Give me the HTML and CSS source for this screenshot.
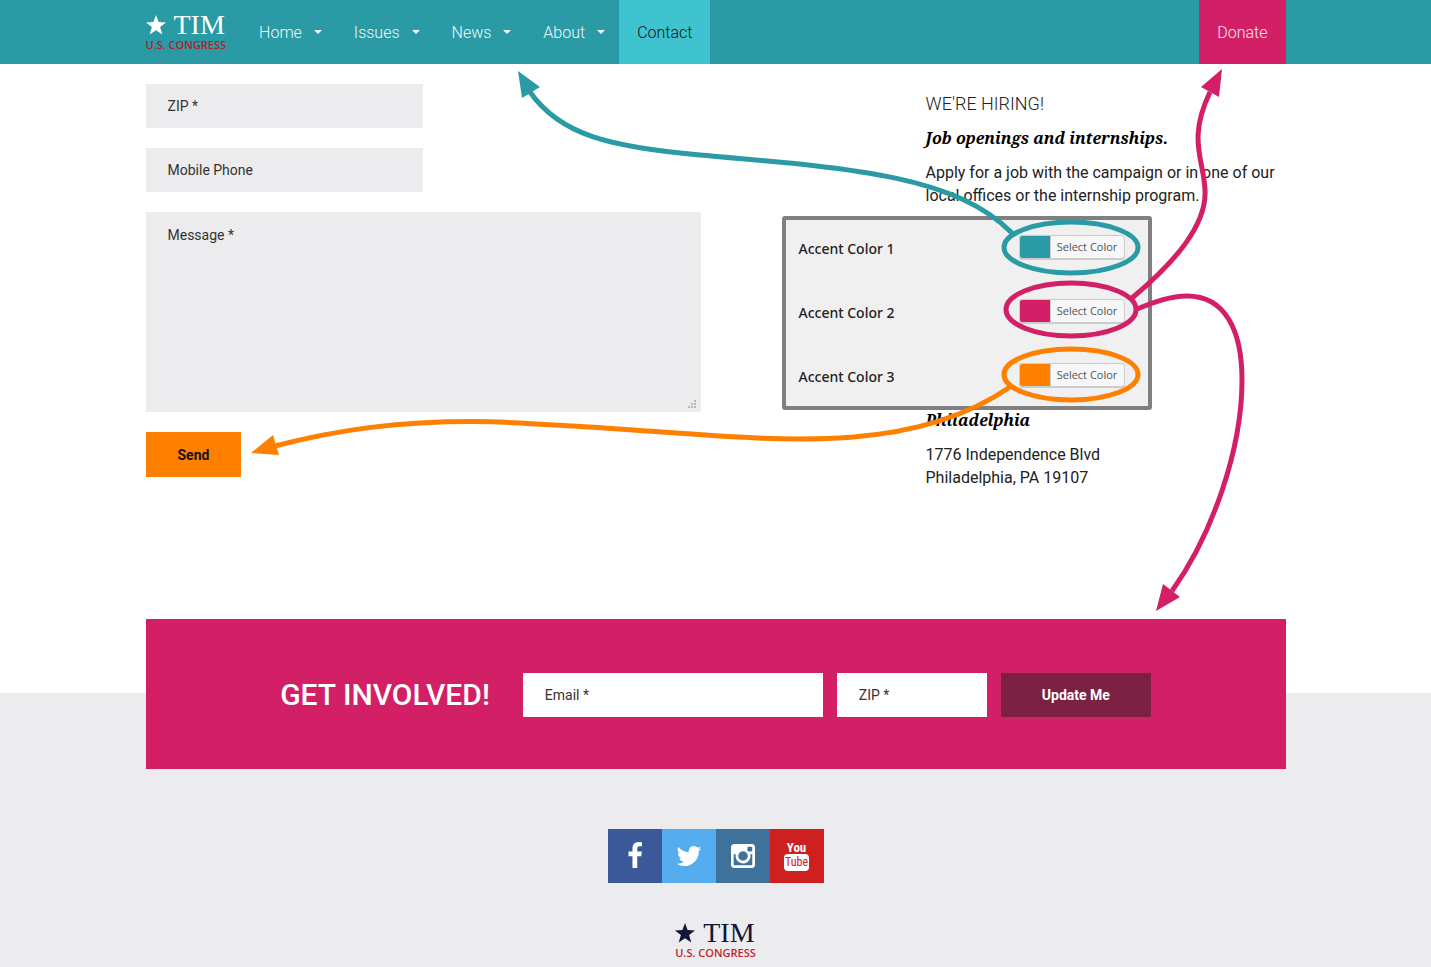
FILE: index.html
```html
<!DOCTYPE html>
<html lang="en">
<head>
<meta charset="utf-8">
<meta name="viewport" content="width=device-width, initial-scale=1">
<title>Contact - Tim for U.S. Congress</title>
<link rel="stylesheet" href="styles.css">
</head>
<body>
<header class="topbar">
  <div class="container topbar-inner">
    <a class="logo" href="#">
      <span class="logo-top">
        <svg class="logo-star" viewBox="0 0 20 20" aria-hidden="true"><polygon points="10,0 12.6,7.1 20,7.4 14.1,12 16.3,19.5 10,15.2 3.7,19.5 5.9,12 0,7.4 7.4,7.1"/></svg>
        <span class="logo-name">TIM</span>
      </span>
      <span class="logo-sub">U.S. CONGRESS</span>
    </a>
    <nav class="nav">
      <a class="nav-link has-menu" href="#">Home</a>
      <a class="nav-link has-menu" href="#">Issues</a>
      <a class="nav-link has-menu" href="#">News</a>
      <a class="nav-link has-menu" href="#">About</a>
      <a class="nav-link active" href="#">Contact</a>
    </nav>
    <a class="nav-link donate" href="#">Donate</a>
  </div>
</header>

<main class="container main">
  <form class="contact-form">
    <input class="field field-half" type="text" placeholder="ZIP *" aria-label="ZIP">
    <input class="field field-half" type="tel" placeholder="Mobile Phone" aria-label="Mobile Phone">
    <div class="message">
      <textarea class="field field-message" placeholder="Message *" aria-label="Message"></textarea>
      <svg class="grip" viewBox="0 0 8 8" aria-hidden="true"><path d="M6 0h2v2H6zM3 3h2v2H3zM6 3h2v2H6zM0 6h2v2H0zM3 6h2v2H3zM6 6h2v2H6z"/></svg>
    </div>
    <button class="send" type="button">Send</button>
  </form>

  <aside class="info">
    <h2 class="info-title">WE'RE HIRING!</h2>
    <h3 class="info-lead">Job openings and internships.</h3>
    <p class="info-text">Apply for a job with the campaign or in one of our local offices or the internship program.</p>
    <section class="office">
      <h3 class="info-lead">Philadelphia</h3>
      <p class="info-text">1776 Independence Blvd<br>Philadelphia, PA 19107</p>
    </section>
  </aside>

  <section class="palette">
    <div class="palette-row">
      <span class="palette-label" id="accent1">Accent Color 1</span>
      <button class="picker" type="button" aria-describedby="accent1"><span class="swatch swatch-teal"></span><span class="picker-text">Select Color</span></button>
    </div>
    <div class="palette-row">
      <span class="palette-label" id="accent2">Accent Color 2</span>
      <button class="picker" type="button" aria-describedby="accent2"><span class="swatch swatch-pink"></span><span class="picker-text">Select Color</span></button>
    </div>
    <div class="palette-row">
      <span class="palette-label" id="accent3">Accent Color 3</span>
      <button class="picker" type="button" aria-describedby="accent3"><span class="swatch swatch-orange"></span><span class="picker-text">Select Color</span></button>
    </div>
  </section>

  <svg class="arrows" viewBox="146 64 1140 555" aria-hidden="true">
    <g class="arrow-teal">
      <ellipse cx="1071" cy="247.500" rx="67" ry="25.500"/>
      <path d="M1012 233C955 175 850 168 700 155C610 147 560 135 530 92"/>
      <polygon points="518,71 540,87 522,98"/>
    </g>
    <g class="arrow-pink">
      <ellipse cx="1071" cy="309.500" rx="65" ry="26.500"/>
      <path d="M1132 298C1175 262 1207 225 1205 190C1204 160 1187 140 1210 92"/>
      <polygon points="1222,69 1201,87 1219,97"/>
      <path d="M1137 309C1155 302 1170 296 1187 296C1225 296 1242 330 1242 380C1242 450 1212 535 1172 591"/>
      <polygon points="1156,611 1163,584 1180,597"/>
    </g>
    <g class="arrow-orange">
      <ellipse cx="1071" cy="374.500" rx="67" ry="25.500"/>
      <path d="M1010 387C900 463 750 436 573 426C540 424 505 421.500 473 421.500C400 421.500 340 429 275 446"/>
      <polygon points="251,453 273,435 279,455"/>
    </g>
  </svg>
</main>

<section class="signup-band">
  <form class="container signup">
    <h2 class="signup-title">GET INVOLVED!</h2>
    <div class="signup-fields">
      <input class="field field-white field-email" type="email" placeholder="Email *" aria-label="Email">
      <input class="field field-white field-zip" type="text" placeholder="ZIP *" aria-label="ZIP code">
      <button class="update" type="button">Update Me</button>
    </div>
  </form>
</section>

<footer class="footer">
  <div class="social">
    <a class="social-link facebook" href="#" aria-label="Facebook"><svg viewBox="0 0 1792 1792"><path d="M1343 12v264h-157q-86 0-116 36t-30 108v189h293l-39 296h-254v759h-306v-759h-255v-296h255v-218q0-186 104-288.500t277-102.500q147 0 228 12z"/></svg></a>
    <a class="social-link twitter" href="#" aria-label="Twitter"><svg viewBox="0 0 1792 1792"><path d="M1684 408q-67 98-162 167 1 14 1 42 0 130-38 259.500t-115.500 248.500-184.500 210.500-258 146-323 54.500q-271 0-496-145 35 4 78 4 225 0 401-138-105-2-188-64.500t-114-159.500q33 5 61 5 43 0 85-11-112-23-185.500-111.500t-73.500-205.500v-4q68 38 146 41-66-44-105-115t-39-154q0-88 44-163 121 149 294.500 238.500t371.500 99.500q-8-38-8-74 0-134 94.500-228.500t228.500-94.500q140 0 236 102 109-21 205-78-37 115-142 178 93-10 186-50z"/></svg></a>
    <a class="social-link instagram" href="#" aria-label="Instagram"><svg viewBox="0 0 1792 1792"><path d="M1490 1426v-648h-135q20 63 20 131 0 126-64 232.500t-174 168.500-240 62q-197 0-337-135.500t-140-327.500q0-68 20-131h-141v648q0 26 17.500 43.500t43.500 17.500h1069q25 0 43-17.500t18-43.500zm-284-533q0-124-90.500-211.500t-218.500-87.500q-127 0-217.500 87.500t-90.500 211.500 90.500 211.500 217.500 87.500q128 0 218.500-87.500t90.500-211.500zm284-360v-165q0-28-20-48.500t-49-20.500h-174q-29 0-49 20.500t-20 48.500v165q0 29 20 49t49 20h174q29 0 49-20t20-49zm174-208v1142q0 81-58 139t-139 58h-1142q-81 0-139-58t-58-139v-1142q0-81 58-139t139-58h1142q81 0 139 58t58 139z"/></svg></a>
    <a class="social-link youtube" href="#"><span class="yt-you">You</span><span class="yt-tube">Tube</span></a>
  </div>
  <a class="logo logo-dark" href="#">
    <span class="logo-top">
      <svg class="logo-star" viewBox="0 0 20 20" aria-hidden="true"><polygon points="10,0 12.6,7.1 20,7.4 14.1,12 16.3,19.5 10,15.2 3.7,19.5 5.9,12 0,7.4 7.4,7.1"/></svg>
      <span class="logo-name">TIM</span>
    </span>
    <span class="logo-sub">U.S. CONGRESS</span>
  </a>
</footer>
</body>
</html>
```

FILE: styles.css
```css
:root {
  --teal: #2a9ba4;
  --pink: #d31f66;
  --orange: #ff8000;
  --gray: #ececee;
}

* { box-sizing: border-box; }

body {
  margin: 0;
  min-height: 100vh;
  display: flex;
  flex-direction: column;
  background: #fff;
  color: #222;
  font-family: Roboto, sans-serif;
  font-size: 16px;
  line-height: 23px;
}

h2, h3, p { margin: 0; }
a { text-decoration: none; }
button, input, textarea { font-family: inherit; border: 0; border-radius: 0; margin: 0; }
button { cursor: pointer; }

.container {
  width: 100%;
  max-width: 1140px;
  margin: 0 auto;
}

/* Header */
.topbar { background: var(--teal); }
.topbar-inner { display: flex; align-items: stretch; height: 64px; }
.nav { display: flex; margin-left: 15px; }
.nav-link {
  display: flex;
  align-items: center;
  padding: 0 18px;
  color: #f0f8f9;
  font-size: 16px;
  font-weight: 300;
}
.has-menu { padding-right: 14px; }
.has-menu::after {
  content: "";
  margin-left: 12px;
  border: 4px solid transparent;
  border-top-color: currentColor;
  border-bottom: 0;
}
.active { background: #3fc4cf; color: #111; }
.donate { margin-left: auto; background: var(--pink); color: #fbe6ee; }

/* Logo */
.logo {
  display: flex;
  flex-direction: column;
  justify-content: center;
  gap: 2px;
  color: #fff;
}
.logo-top { display: flex; align-items: center; gap: 8px; height: 24px; }
.logo-star { width: 20px; height: 20px; fill: currentColor; }
.logo-name { font-family: "Liberation Serif", serif; font-size: 28px; line-height: 24px; }
.logo-sub {
  color: #b2202c;
  font-family: "Open Sans", sans-serif;
  font-size: 11px;
  font-weight: 600;
  line-height: 12px;
}
.logo-dark { color: #14163a; }
.logo-dark .logo-sub { color: #c0272d; }

/* Main */
.main {
  position: relative;
  display: flex;
  justify-content: space-between;
  padding: 20px 0 130px;
}
.contact-form {
  width: 49%;
  max-width: 555px;
  display: flex;
  flex-direction: column;
  align-items: flex-start;
  gap: 20px;
}
.field {
  display: block;
  height: 44px;
  padding: 0 22px;
  background: var(--gray);
  color: #333;
  font-size: 14px;
}
.field::placeholder { color: #333; opacity: 1; }
.field-half { width: 50%; }
.message { position: relative; width: 100%; }
.field-message { width: 100%; height: 200px; padding: 12px 22px; line-height: 22px; resize: none; }
.grip { position: absolute; right: 5px; bottom: 4px; width: 8px; height: 8px; fill: #b9b9bb; }
.send {
  height: 45px;
  padding: 0 32px;
  background: var(--orange);
  color: #111;
  font-size: 14px;
  font-weight: 700;
}

.info { width: 360px; padding-top: 8px; }
.info-title { font-size: 18px; font-weight: 300; line-height: 24px; }
.info-lead {
  padding: 11px 0;
  color: #000;
  font-family: "Noto Serif", "DejaVu Serif Condensed", "DejaVu Serif", serif;
  font-size: 16px;
  font-style: italic;
  font-weight: 700;
  line-height: 23px;
}
.office { margin-top: 191px; }

/* Accent colour panel */
.palette {
  position: absolute;
  top: 152px;
  right: 134px;
  width: 370px;
  display: flex;
  flex-direction: column;
  gap: 40px;
  padding: 15px 23px 19px 13px;
  border: 4px solid #808080;
  border-radius: 3px;
  background: #f0f0f0;
}
.palette-row { display: flex; align-items: center; justify-content: space-between; height: 24px; }
.palette-label { padding-top: 2px; font-family: "Noto Sans", sans-serif; font-size: 14px; font-weight: 500; }
.picker {
  display: flex;
  width: 106px;
  height: 24px;
  padding: 0;
  border: 1px solid #ccc;
  border-radius: 3px;
  background: #f7f7f7;
  box-shadow: 0 1px 0 #ccc;
  color: #555;
  font-family: "Open Sans", sans-serif;
  font-size: 11px;
}
.swatch { width: 30px; height: 22px; border-radius: 2px 0 0 2px; }
.swatch-teal { background: var(--teal); }
.swatch-pink { background: var(--pink); }
.swatch-orange { background: var(--orange); }
.picker-text { flex: 1; border-left: 1px solid #ccc; line-height: 22px; text-align: center; }

/* Arrows drawn over the page */
.arrows { position: absolute; top: 0; right: 0; width: 1140px; height: 555px; pointer-events: none; }
.arrows path, .arrows ellipse { fill: none; stroke: currentColor; stroke-width: 5; }
.arrows polygon { fill: currentColor; }
.arrow-teal { color: var(--teal); }
.arrow-pink { color: var(--pink); }
.arrow-orange { color: var(--orange); }

/* Sign-up banner */
.signup-band { background: linear-gradient(#fff 74px, var(--gray) 74px); }
.signup {
  display: flex;
  align-items: center;
  justify-content: center;
  gap: 33px;
  min-height: 150px;
  padding-top: 2px;
  background: var(--pink);
}
.signup-title { color: #fff; font-size: 30px; font-weight: 500; line-height: 36px; }
.signup-fields { display: flex; gap: 14px; }
.field-white { background: #fff; }
.field-email { width: 300px; }
.field-zip { width: 150px; }
.update {
  width: 150px;
  height: 44px;
  background: #7b2142;
  color: #fff;
  font-size: 14px;
  font-weight: 700;
}

/* Footer */
.footer {
  flex: 1;
  display: flex;
  flex-direction: column;
  align-items: center;
  gap: 38px;
  padding: 60px 0 8px;
  background: var(--gray);
}
.social { display: flex; }
.social-link {
  display: flex;
  align-items: center;
  justify-content: center;
  width: 54px;
  height: 54px;
  color: #fff;
}
.social-link svg { width: 28px; height: 28px; fill: currentColor; }
.facebook { background: #3b5998; }
.twitter { background: #55acee; }
.instagram { background: #3f729b; }
.youtube {
  flex-direction: column;
  background: #cd201f;
  font-family: "Roboto Condensed", "Liberation Sans Narrow", sans-serif;
  font-size: 13px;
  font-weight: 700;
  line-height: 13px;
}
.yt-tube {
  padding: 2px 1px;
  border-radius: 4px;
  background: #fff;
  color: #cd201f;
  font-size: 12px;
  font-weight: 400;
}
```
